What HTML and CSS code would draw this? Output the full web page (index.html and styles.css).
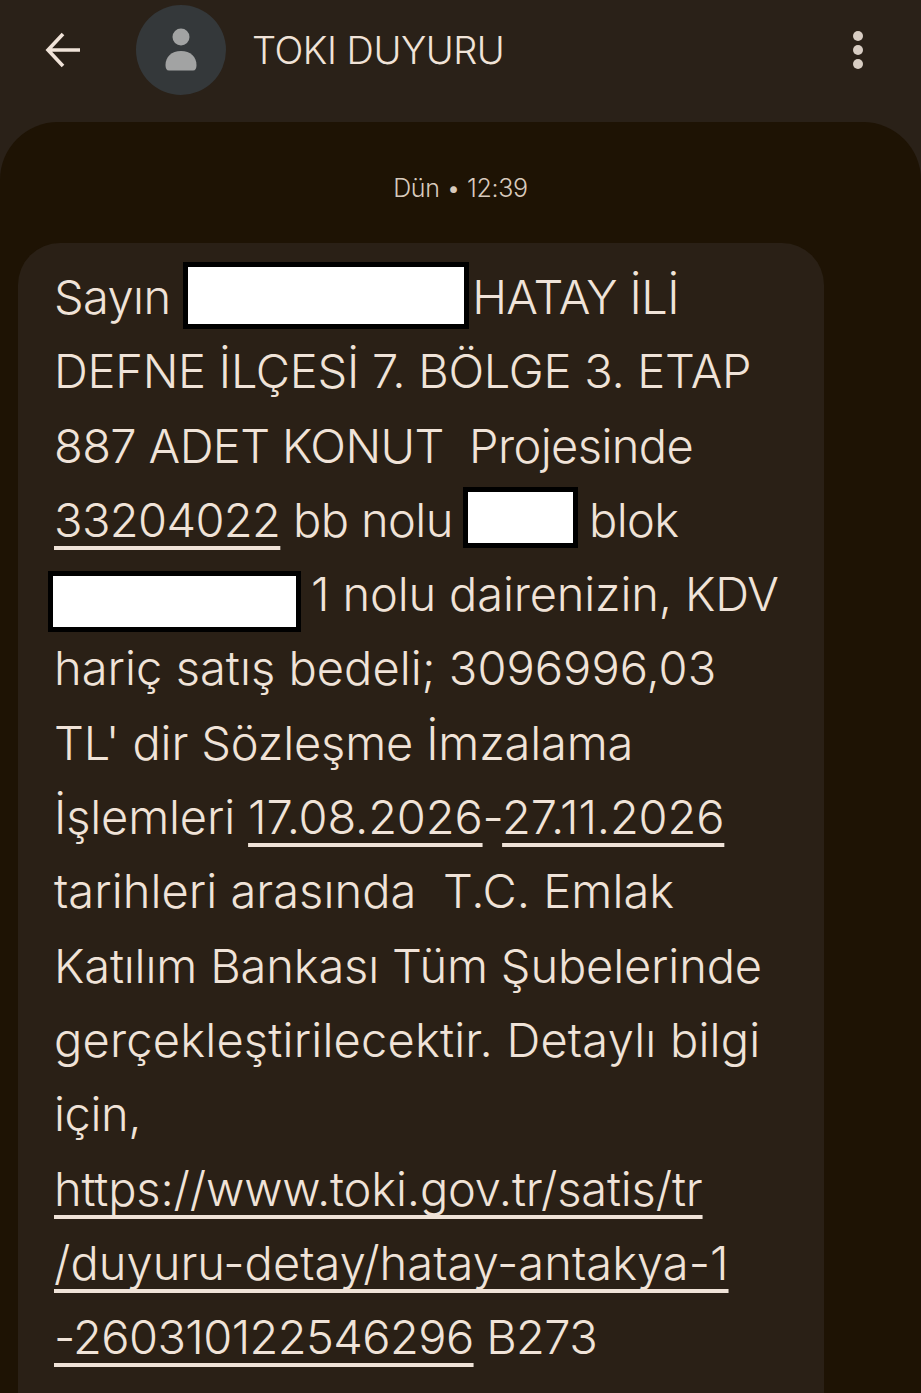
FILE: index.html
```html
<!DOCTYPE html>
<html lang="tr">
<head>
<meta charset="utf-8">
<title>TOKI DUYURU</title>
<link rel="stylesheet" href="styles.css">
</head>
<body>
<div class="screen">
  <header class="topbar">
    <svg class="back" viewBox="0 0 40 40" width="40" height="40" aria-hidden="true"><path d="M37 20H6M20 4 5 20 20 36" fill="none" stroke="#f0e3d8" stroke-width="3.600"/></svg>
    <div class="avatar">
      <svg viewBox="0 0 90 90" width="90" height="90" aria-hidden="true"><circle cx="45" cy="32" r="8.500" fill="#a2a3a3"/><path d="M33 65.500c-2.500 0-3.500-2-3.500-5.500 0-8 6-14 15.500-14S60.500 52 60.500 60c0 3.500-1 5.500-3.500 5.500Z" fill="#a2a3a3"/></svg>
    </div>
    <h1 class="title">TOKI DUYURU</h1>
    <div class="menu"><i></i><i></i><i></i></div>
  </header>
  <main class="panel">
    <p class="stamp">Dün • 12:39</p>
    <article class="bubble">
      <div class="line tight">Sayın <span class="mask mask-name"></span>HATAY İLİ</div>
      <div class="line snug">DEFNE İLÇESİ 7. BÖLGE 3. ETAP</div>
      <div class="line tight">887 ADET KONUT&nbsp; Projesinde</div>
      <div class="line tight"><u>33204022</u> bb nolu <span class="mask mask-block"></span> blok</div>
      <div class="line mid"><span class="mask mask-floor"></span> 1 nolu dairenizin, KDV</div>
      <div class="line loose">hariç satış bedeli; 3096996,03</div>
      <div class="line mid">TL' dir Sözleşme İmzalama</div>
      <div class="line mid">İşlemleri <u>17.08.2026</u>-<u>27.11.2026</u></div>
      <div class="line loose">tarihleri arasında&nbsp; T.C. Emlak</div>
      <div class="line mid">Katılım Bankası Tüm Şubelerinde</div>
      <div class="line looser">gerçekleştirilecektir. Detaylı bilgi</div>
      <div class="line">için,</div>
      <div class="line mid"><u>https://www.toki.gov.tr/satis/tr</u></div>
      <div class="line loose"><u>/duyuru-detay/hatay-antakya-1</u></div>
      <div class="line tight"><u>-260310122546296</u> B273</div>
    </article>
  </main>
</div>
</body>
</html>
```
FILE: styles.css
```css
* { box-sizing: border-box; }
html, body { margin: 0; padding: 0; background: #2a2118; }
.screen {
  width: 921px;
  height: 1393px;
  overflow: hidden;
  background: #2a2118;
  font-family: Inter, Lato, sans-serif;
  color: #f0e3d8;
}
.topbar {
  height: 122px;
  padding-bottom: 22px;
  display: flex;
  align-items: center;
}
.back { margin-left: 43px; }
.avatar {
  width: 90px;
  height: 90px;
  margin-left: 53px;
  border-radius: 50%;
  background: #34383a;
}
.avatar svg { display: block; }
.title {
  margin: 0 0 0 26px;
  font-size: 38px;
  font-weight: 300;
  letter-spacing: -0.5px;
  color: #f0e3d8;
}
.menu {
  margin-left: auto;
  margin-right: 58px;
  display: flex;
  flex-direction: column;
  gap: 4px;
}
.menu i {
  display: block;
  width: 10px;
  height: 10px;
  border-radius: 50%;
  background: #d8cdc3;
}
.panel {
  height: 1271px;
  padding: 1px 0 0 18px;
  background: #1e1304;
  border-radius: 58px 58px 0 0;
}
.stamp {
  margin: 48px 0 0;
  padding-right: 18px;
  height: 34px;
  line-height: 34px;
  text-align: center;
  font-size: 25px;
  font-weight: 300;
  letter-spacing: -0.3px;
  color: #d8cabd;
}
.bubble {
  width: 806px;
  height: 1200px;
  margin-top: 38px;
  padding: 17px 0 0 36px;
  background: #2a2016;
  border-radius: 42px;
  font-size: 47px;
  font-weight: 300;
  letter-spacing: -0.4px;
}
.line { height: 74.3px; line-height: 74.3px; white-space: nowrap; }
.tight { letter-spacing: -0.6px; }
.snug { letter-spacing: -0.25px; }
.mid { letter-spacing: -0.15px; }
.loose { letter-spacing: 0.05px; }
.looser { letter-spacing: 0.2px; }
.line u {
  text-decoration-thickness: 4px;
  text-underline-offset: 9px;
  text-decoration-skip-ink: none;
}
.mask {
  display: inline-block;
  margin-top: -20px;
  margin-bottom: -20px;
  background: #fff;
  border: 5px solid #000;
}
.mask-name { width: 286px; height: 67px; margin-left: 0; margin-right: 3px; vertical-align: 5px; }
.mask-block { width: 115px; height: 61px; margin-left: -2px; margin-right: -2px; vertical-align: 9px; }
.mask-floor { width: 253px; height: 61px; margin-left: -6px; margin-right: -3px; vertical-align: -1px; }
```
